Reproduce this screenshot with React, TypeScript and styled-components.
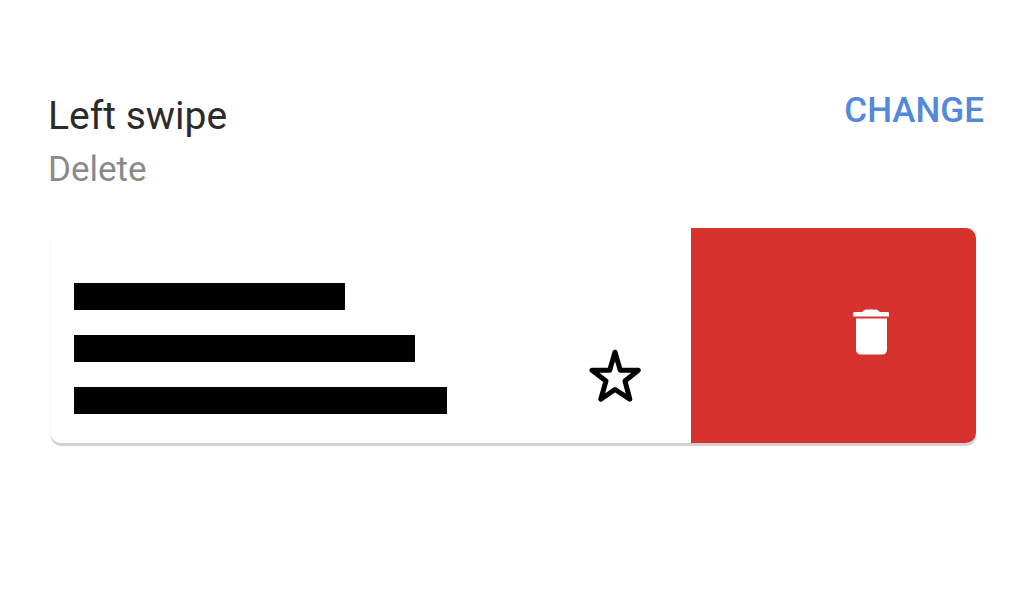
import React from "react";
import styled, { createGlobalStyle } from "styled-components";

const GlobalStyle = createGlobalStyle`
  * { box-sizing: border-box; }
  body { margin: 0; background: #fff; font-family: Roboto, "Liberation Sans", sans-serif; }
`;

const Page = styled.main`
  padding: 92px 40px 40px 48px;
`;

const Header = styled.header`
  display: flex;
  justify-content: space-between;
  align-items: flex-start;
`;

const Title = styled.h1`
  margin: 0;
  font-size: 39px;
  line-height: 48px;
  font-weight: 400;
  color: #2b2b2b;
`;

const Subtitle = styled.p`
  margin: 6px 0 0;
  font-size: 35px;
  line-height: 48px;
  font-weight: 400;
  color: #8a8a8a;
`;

const ChangeButton = styled.button`
  padding: 0;
  border: 0;
  background: none;
  font-family: inherit;
  font-size: 35px;
  line-height: 38px;
  font-weight: 500;
  color: #5488da;
  cursor: pointer;
`;

const Card = styled.section`
  display: flex;
  height: 215px;
  margin: 34px 8px 0 3px;
  border-radius: 10px;
  background: #fff;
  overflow: hidden;
  box-shadow: 0 3px 1px #d0d0d0, 0 1px 2px #eeeeee;
`;

const Message = styled.div`
  flex: 1;
  display: flex;
  justify-content: space-between;
  align-items: flex-end;
  padding: 0 49px 29px 23px;
  background: #fff;
`;

const Lines = styled.div`
  display: grid;
  gap: 25px;
`;

const Line = styled.div<{ $width: number }>`
  width: ${(p) => p.$width}px;
  height: 27px;
  background: #000;
`;

const StarButton = styled.button`
  display: flex;
  margin-bottom: 12px;
  padding: 0;
  border: 0;
  background: none;
  cursor: pointer;
`;

const DeleteAction = styled.button`
  flex: 0 0 285px;
  display: flex;
  align-items: center;
  justify-content: flex-end;
  padding: 0 87px 8px 0;
  border: 0;
  background: #d8322f;
  cursor: pointer;
`;

const lineWidths = [271, 341, 373];

export default function App() {
  return (
    <Page>
      <GlobalStyle />
      <Header>
        <div>
          <Title>Left swipe</Title>
          <Subtitle>Delete</Subtitle>
        </div>
        <ChangeButton type="button">CHANGE</ChangeButton>
      </Header>
      <Card>
        <Message>
          <Lines>
            {lineWidths.map((width) => (
              <Line key={width} $width={width} />
            ))}
          </Lines>
          <StarButton type="button" aria-label="Star">
            <svg width="54" height="54" viewBox="0 0 54 54" fill="none" stroke="#000" strokeWidth="5" strokeLinejoin="round">
              <path d="M27 4.2 32.3 22.3 50.3 22.3 37 33 41.8 51.2 27 41.5 12.8 51.2 18 33 4 22.3 21.7 22.3Z" />
            </svg>
          </StarButton>
        </Message>
        <DeleteAction type="button" aria-label="Delete">
          <svg width="36" height="46" viewBox="0 0 36 46" fill="#fff">
            <path d="M1 3H9Q11 .5 13 .5H23Q25 .5 27 3H35Q36 3 36 4V7.5H0V4Q0 3 1 3Z" />
            <path d="M3 9.5H34V40Q34 45.5 29 45.5H8Q3 45.5 3 40Z" />
          </svg>
        </DeleteAction>
      </Card>
    </Page>
  );
}
